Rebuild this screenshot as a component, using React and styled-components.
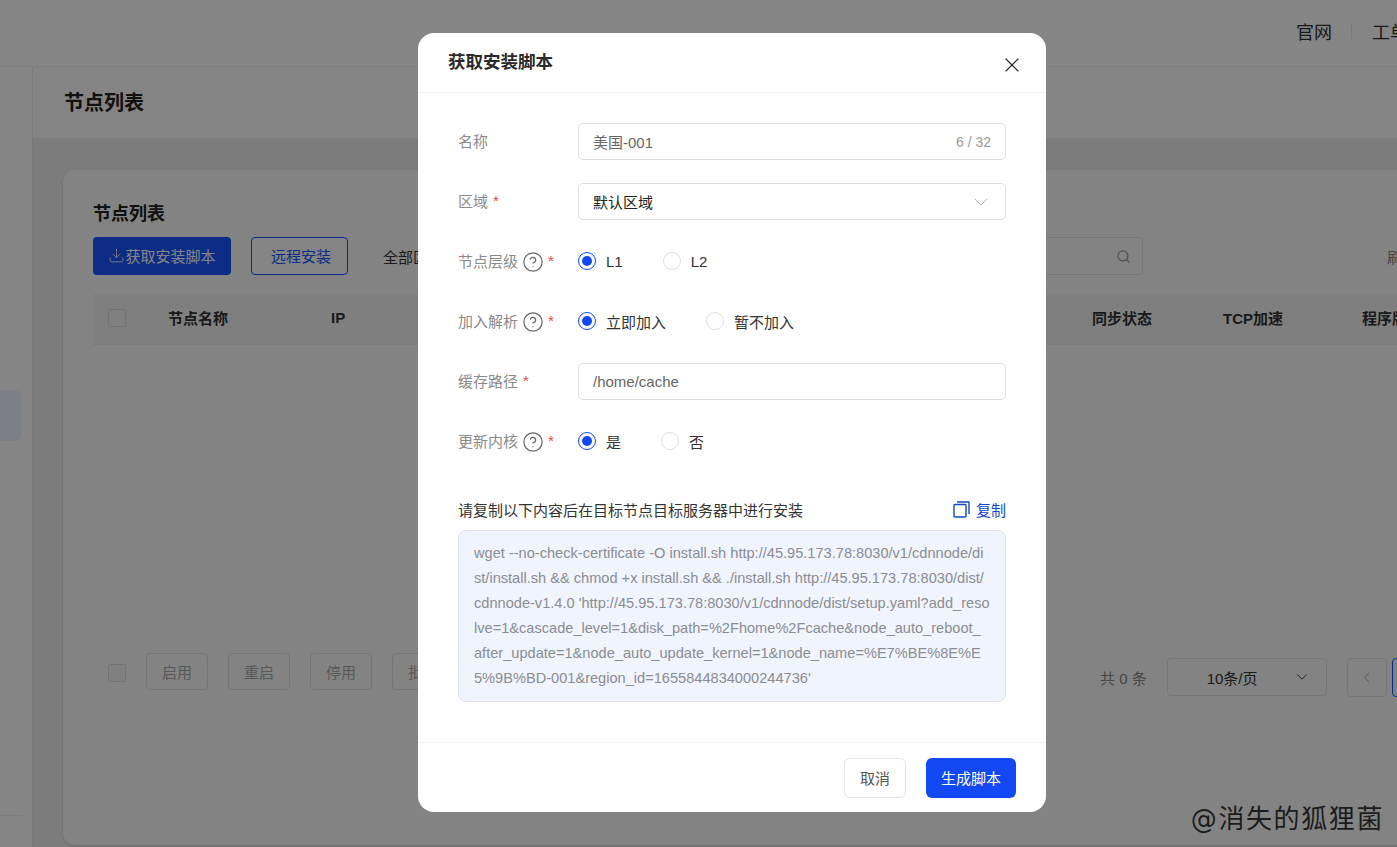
import React from 'react';
import styled, { createGlobalStyle } from 'styled-components';
import { ChevronDown, ChevronLeft, CircleHelp, Download, Search, X } from 'lucide-react';

const GlobalStyle = createGlobalStyle`
  html, body {
    margin: 0;
    padding: 0;
    height: 100%;
    overflow: hidden;
  }
  body {
    font-family: "Liberation Sans", "Noto Sans CJK SC", sans-serif;
    color: #333;
  }
  * {
    box-sizing: border-box;
  }
`;

const Page = styled.div`
  position: relative;
  width: 1397px;
  height: 847px;
  overflow: hidden;
  display: flex;
  flex-direction: column;
  background: #eeeeee;
`;

const TopBar = styled.header`
  flex: 0 0 67px;
  display: flex;
  align-items: center;
  justify-content: flex-start;
  padding-left: 1296px;
  padding-bottom: 5px;
  background: #fff;
  border-bottom: 1px solid #f0f0f0;
`;

const TopLink = styled.a`
  flex: none;
  font-size: 18px;
  color: #333;
`;

const TopDivider = styled.span`
  flex: none;
  width: 1px;
  height: 16px;
  margin: 0 20px 0 19px;
  background: #e4e4e4;
`;

const Body = styled.div`
  flex: 1;
  display: flex;
  min-height: 0;
`;

const Sidebar = styled.aside`
  flex: 0 0 33px;
  display: flex;
  flex-direction: column;
  padding-top: 323px;
  background: #fff;
  border-right: 1px solid #e8e8e8;
`;

const SideActive = styled.div`
  width: 21px;
  height: 51px;
  border-radius: 0 6px 6px 0;
  background: #eef3ff;
`;

const SideFooter = styled.div`
  width: 23px;
  margin-top: auto;
  margin-bottom: 31px;
  border-top: 1px solid #eeeeee;
`;

const Main = styled.main`
  flex: 1;
  min-width: 0;
  display: flex;
  flex-direction: column;
`;

const TitleBar = styled.div`
  flex: 0 0 72px;
  display: flex;
  align-items: center;
  padding: 0 0 3px 31px;
  background: #fdfdfd;
  border-bottom: 1px solid #f0f0f0;
  font-size: 20px;
  font-weight: 700;
  color: #222;
`;

const Content = styled.div`
  flex: 1;
  min-height: 0;
  padding: 31px 0 2px 30px;
`;

const Card = styled.section`
  width: 1400px;
  height: 100%;
  display: flex;
  flex-direction: column;
  padding: 31px 30px 0;
  border-radius: 12px;
  background: #fbfbfb;
  box-shadow: 0 1px 3px rgba(0, 0, 0, 0.12);
`;

const CardTitle = styled.h2`
  margin: 0 0 10px;
  font-size: 18px;
  line-height: 26px;
  font-weight: 700;
  color: #222;
`;

const Toolbar = styled.div`
  display: flex;
  align-items: center;
  height: 38px;
`;

const PrimaryAction = styled.button`
  flex: none;
  width: 138px;
  height: 38px;
  display: flex;
  align-items: center;
  justify-content: center;
  padding: 0 0 2px;
  border: none;
  border-radius: 4px;
  background: #1755ff;
  color: #fff;
  font: inherit;
  font-size: 15px;
`;

const OutlineAction = styled.button`
  flex: none;
  width: 97px;
  height: 38px;
  margin-left: 20px;
  padding: 0 0 2px 3px;
  border: 1px solid #1755ff;
  border-radius: 4px;
  background: #fff;
  color: #1755ff;
  font: inherit;
  font-size: 15px;
`;

const FilterText = styled.span`
  flex: none;
  width: 130px;
  margin-left: 35px;
  font-size: 15px;
  color: #333;
`;

const SearchBox = styled.div`
  flex: none;
  width: 500px;
  height: 38px;
  margin-left: 130px;
  display: flex;
  align-items: center;
  justify-content: flex-end;
  padding-right: 11px;
  border: 1px solid #e4e4e4;
  border-radius: 4px;
  color: #999;
`;

const RefreshText = styled.span`
  flex: none;
  margin-left: 244px;
  font-size: 15px;
  color: #888;
`;

const TableHead = styled.div`
  display: grid;
  grid-template-columns: 75px 163px 761px 131px 139px 100px;
  align-items: center;
  height: 51px;
  margin-top: 19px;
  padding-bottom: 3px;
  background: #f3f3f3;
  border-bottom: 1px solid #ececec;
  font-size: 15px;
  font-weight: 700;
  color: #333;
`;

const CheckCell = styled.div`
  padding-left: 15px;
  display: flex;
`;

const CheckBox = styled.span`
  flex: none;
  display: block;
  width: 18px;
  height: 18px;
  border: 1px solid #dcdcdc;
  border-radius: 2px;
  background: #f6f6f6;
`;

const FooterCheck = styled(CheckBox)`
  margin-top: -8px;
`;

const HeadCell = styled.div`
  white-space: nowrap;
`;

const TableFooter = styled.div`
  display: flex;
  align-items: center;
  margin-top: auto;
  margin-bottom: 146px;
  padding-left: 15px;
  height: 44px;
`;

const GhostButton = styled.button`
  flex: none;
  width: 62px;
  height: 37px;
  margin-left: 20px;
  margin-top: -12px;
  padding: 0;
  border: 1px solid #e2e2e2;
  border-radius: 4px;
  background: #fbfbfb;
  color: #aaa;
  font: inherit;
  font-size: 15px;
`;

const TotalText = styled.span`
  flex: none;
  margin-left: 646px;
  font-size: 15px;
  color: #888;
`;

const PageSize = styled.div`
  flex: none;
  width: 160px;
  height: 38px;
  margin-left: 20px;
  display: flex;
  align-items: center;
  justify-content: space-between;
  padding: 0 15px 0 39px;
  border: 1px solid #e2e2e2;
  border-radius: 4px;
  font-size: 15px;
  color: #333;
`;

const PageNav = styled.button`
  flex: none;
  width: 40px;
  height: 39px;
  margin-left: 20px;
  display: flex;
  align-items: center;
  justify-content: center;
  padding: 0;
  border: 1px solid #e2e2e2;
  border-radius: 4px;
  background: #fbfbfb;
  color: #aaa;
`;

const PageCurrent = styled.button`
  flex: none;
  width: 40px;
  height: 39px;
  margin-left: 5px;
  padding: 0;
  border: 1px solid #1755ff;
  border-radius: 4px;
  background: #eef3ff;
`;

const Overlay = styled.div`
  position: absolute;
  inset: 0;
  padding: 33px 0 0 418px;
  background: rgba(0, 0, 0, 0.48);
`;

const Dialog = styled.div`
  width: 628px;
  height: 779px;
  display: flex;
  flex-direction: column;
  border-radius: 16px;
  background: #fff;
`;

const DialogHeader = styled.div`
  flex: 0 0 60px;
  display: flex;
  align-items: center;
  justify-content: space-between;
  padding: 0 22px 5px 30px;
  border-bottom: 1px solid #f2f2f2;
`;

const DialogTitle = styled.h3`
  margin: 0;
  font-size: 17.5px;
  font-weight: 700;
  color: #2a2a2a;
`;

const CloseButton = styled.button`
  display: flex;
  width: 24px;
  height: 24px;
  margin-top: 9px;
  padding: 0;
  border: none;
  background: none;
  color: #222;
`;

const DialogBody = styled.div`
  flex: 1;
  display: flex;
  flex-direction: column;
  padding: 30px 40px 0;
`;

const FormRow = styled.div`
  display: flex;
  align-items: center;
  height: 37px;
  margin-bottom: 23px;
`;

const Label = styled.div`
  flex: 0 0 120px;
  display: flex;
  align-items: center;
  padding-bottom: 2px;
  font-size: 15px;
  color: #8a8a8a;
`;

const Star = styled.span`
  margin-left: 5px;
  color: #e5484d;
`;

const HelpIcon = styled(CircleHelp)`
  margin: 2px -1px 0 4px;
  color: #666;
`;

const Field = styled.div`
  flex: 1;
  height: 37px;
  display: flex;
  align-items: center;
  padding: 0 14px;
  border: 1px solid #dcdfe6;
  border-radius: 5px;
  background: #fff;
`;

const FieldInput = styled.input`
  flex: 1;
  min-width: 0;
  padding: 0;
  border: none;
  outline: none;
  background: none;
  font: inherit;
  font-size: 15px;
  color: ${(p) => p.$strong ? '#222' : '#666'};
`;

const Counter = styled.span`
  flex: none;
  font-size: 14px;
  color: #999;
`;

const SelectArrow = styled(ChevronDown)`
  flex: none;
  margin-right: -2px;
  color: #aaa;
`;

const RadioGroup = styled.div`
  display: flex;
  align-items: center;
  gap: 40px;
`;

const RadioItem = styled.label`
  display: flex;
  align-items: center;
  gap: 10px;
  padding-bottom: 1px;
  font-size: 15px;
  color: #333;
`;

const RadioDot = styled.span`
  flex: none;
  display: flex;
  align-items: center;
  justify-content: center;
  width: 18px;
  height: 18px;
  border-radius: 50%;
  border: 1px solid ${(p) => p.$on ? '#1249f5' : '#dcdfe6'};

  &::after {
    content: '';
    display: ${(p) => p.$on ? 'block' : 'none'};
    width: 10px;
    height: 10px;
    border-radius: 50%;
    background: #1249f5;
  }
`;

const ScriptHead = styled.div`
  display: flex;
  align-items: center;
  justify-content: space-between;
  height: 20px;
  margin-top: 16px;
  margin-bottom: 11px;
  font-size: 15px;
  color: #333;
`;

const CopyLink = styled.a`
  display: flex;
  align-items: center;
  gap: 6px;
  color: #1249c8;
`;

const ScriptBox = styled.div`
  height: 172px;
  padding: 10px 15px;
  border: 1px solid #dde3ee;
  border-radius: 8px;
  background: #f0f4fd;
  font-size: 14.6px;
  line-height: 25px;
  color: #8a8d94;
`;

const ScriptLine = styled.div`
  white-space: nowrap;
`;

const DialogFooter = styled.div`
  flex: 0 0 70px;
  display: flex;
  align-items: flex-start;
  justify-content: flex-end;
  gap: 20px;
  padding: 15px 30px 0 0;
  border-top: 1px solid #f4f4f4;
`;

const CancelButton = styled.button`
  width: 62px;
  height: 40px;
  padding: 0 0 2px;
  border: 1px solid #e2e2e2;
  border-radius: 6px;
  background: #fff;
  color: #555;
  font: inherit;
  font-size: 15px;
`;

const SubmitButton = styled.button`
  width: 90px;
  height: 40px;
  padding: 0 0 2px;
  border: none;
  border-radius: 6px;
  background: #1249f5;
  color: #fff;
  font: inherit;
  font-size: 15px;
`;

const Watermark = styled.div`
  position: absolute;
  right: 13px;
  bottom: 12px;
  font-family: "DejaVu Sans", "Noto Sans CJK SC", sans-serif;
  font-size: 26px;
  line-height: 32px;
  letter-spacing: 1.6px;
  color: #1c1c1c;
`;

const scriptLines = [
  'wget --no-check-certificate -O install.sh http://45.95.173.78:8030/v1/cdnnode/di',
  'st/install.sh && chmod +x install.sh && ./install.sh http://45.95.173.78:8030/dist/',
  "cdnnode-v1.4.0 'http://45.95.173.78:8030/v1/cdnnode/dist/setup.yaml?add_reso",
  'lve=1&cascade_level=1&disk_path=%2Fhome%2Fcache&node_auto_reboot_',
  'after_update=1&node_auto_update_kernel=1&node_name=%E7%BE%8E%E',
  "5%9B%BD-001&region_id=1655844834000244736'",
];

const CopyIcon = () => (
  <svg width="17" height="17" viewBox="0 0 17 17" fill="none" stroke="currentColor" strokeWidth="1.4">
    <rect x="1" y="3.5" width="12" height="12.5" rx="1" />
    <path d="M4 1h11.5a.5.5 0 0 1 .5.5V13" />
  </svg>
);

const RadioOption = ({ on, children }) => (
  <RadioItem>
    <RadioDot $on={on} />
    {children}
  </RadioItem>
);

const App = () => (
  <Page>
    <GlobalStyle />
    <TopBar>
      <TopLink>官网</TopLink>
      <TopDivider />
      <TopLink>工单</TopLink>
    </TopBar>
    <Body>
      <Sidebar>
        <SideActive />
        <SideFooter />
      </Sidebar>
      <Main>
        <TitleBar>节点列表</TitleBar>
        <Content>
          <Card>
            <CardTitle>节点列表</CardTitle>
            <Toolbar>
              <PrimaryAction>
                <Download size={17} strokeWidth={1.2} />
                获取安装脚本
              </PrimaryAction>
              <OutlineAction>远程安装</OutlineAction>
              <FilterText>全部区域</FilterText>
              <SearchBox>
                <Search size={15} />
              </SearchBox>
              <RefreshText>刷新</RefreshText>
            </Toolbar>
            <TableHead>
              <CheckCell><CheckBox /></CheckCell>
              <HeadCell>节点名称</HeadCell>
              <HeadCell>IP</HeadCell>
              <HeadCell>同步状态</HeadCell>
              <HeadCell>TCP加速</HeadCell>
              <HeadCell>程序版本</HeadCell>
            </TableHead>
            <TableFooter>
              <FooterCheck />
              <GhostButton>启用</GhostButton>
              <GhostButton>重启</GhostButton>
              <GhostButton>停用</GhostButton>
              <GhostButton>批量</GhostButton>
              <TotalText>共 0 条</TotalText>
              <PageSize>
                10条/页
                <ChevronDown size={18} strokeWidth={1.2} />
              </PageSize>
              <PageNav><ChevronLeft size={17} strokeWidth={1.4} /></PageNav>
              <PageCurrent />
            </TableFooter>
          </Card>
        </Content>
      </Main>
    </Body>

    <Overlay>
      <Dialog>
        <DialogHeader>
          <DialogTitle>获取安装脚本</DialogTitle>
          <CloseButton><X size={24} strokeWidth={1.1} /></CloseButton>
        </DialogHeader>
        <DialogBody>
          <FormRow>
            <Label>名称</Label>
            <Field>
              <FieldInput readOnly value="美国-001" />
              <Counter>6 / 32</Counter>
            </Field>
          </FormRow>
          <FormRow>
            <Label>区域<Star>*</Star></Label>
            <Field>
              <FieldInput readOnly $strong value="默认区域" />
              <SelectArrow size={24} strokeWidth={0.9} />
            </Field>
          </FormRow>
          <FormRow>
            <Label>节点层级<HelpIcon size={22} strokeWidth={1.3} /><Star>*</Star></Label>
            <RadioGroup>
              <RadioOption on>L1</RadioOption>
              <RadioOption>L2</RadioOption>
            </RadioGroup>
          </FormRow>
          <FormRow>
            <Label>加入解析<HelpIcon size={22} strokeWidth={1.3} /><Star>*</Star></Label>
            <RadioGroup>
              <RadioOption on>立即加入</RadioOption>
              <RadioOption>暂不加入</RadioOption>
            </RadioGroup>
          </FormRow>
          <FormRow>
            <Label>缓存路径<Star>*</Star></Label>
            <Field>
              <FieldInput readOnly value="/home/cache" />
            </Field>
          </FormRow>
          <FormRow>
            <Label>更新内核<HelpIcon size={22} strokeWidth={1.3} /><Star>*</Star></Label>
            <RadioGroup>
              <RadioOption on>是</RadioOption>
              <RadioOption>否</RadioOption>
            </RadioGroup>
          </FormRow>
          <ScriptHead>
            请复制以下内容后在目标节点目标服务器中进行安装
            <CopyLink><CopyIcon />复制</CopyLink>
          </ScriptHead>
          <ScriptBox>
            {scriptLines.map((line) => (
              <ScriptLine key={line}>{line}</ScriptLine>
            ))}
          </ScriptBox>
        </DialogBody>
        <DialogFooter>
          <CancelButton>取消</CancelButton>
          <SubmitButton>生成脚本</SubmitButton>
        </DialogFooter>
      </Dialog>
    </Overlay>
    <Watermark>@消失的狐狸菌</Watermark>
  </Page>
);

export default App;
